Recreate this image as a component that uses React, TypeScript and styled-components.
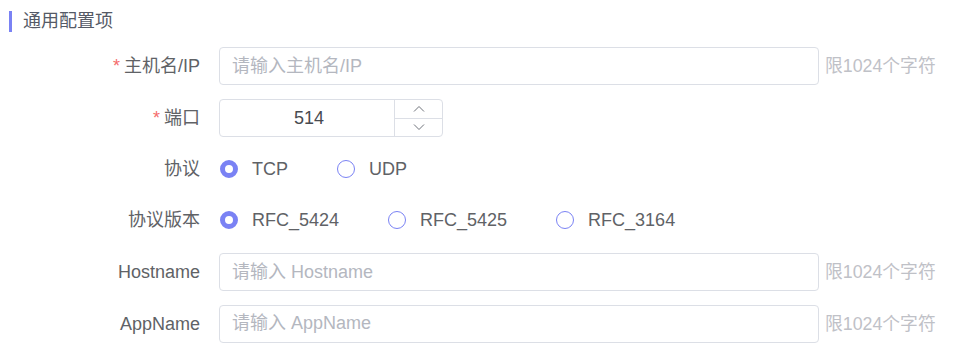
import React from "react";
import styled, { createGlobalStyle } from "styled-components";

const GlobalStyle = createGlobalStyle`
  html, body { margin: 0; padding: 0; background: #ffffff; }
  body {
    font-family: "Liberation Sans", "Noto Sans CJK SC", Arial, sans-serif;
    -webkit-font-smoothing: antialiased;
  }
  * { box-sizing: border-box; }
`;

const ACCENT = "#7a82f4";

const Page = styled.div`
  width: 971px;
  height: 361px;
  padding: 11px 0 0 9px;
  overflow: hidden;
`;

const SectionTitle = styled.div`
  display: flex;
  align-items: center;
  height: 21px;
  gap: 11px;
  font-size: 18px;
  color: #555a66;
  line-height: 21px;
`;

const TitleBar = styled.span`
  width: 3px;
  height: 21px;
  background: ${ACCENT};
`;

const Form = styled.div`
  display: flex;
  flex-direction: column;
  gap: 14px;
  margin-top: 15px;
  margin-left: -9px;
`;

const Row = styled.div<{ $h?: number }>`
  display: flex;
  align-items: center;
  height: ${(p) => p.$h ?? 38}px;
`;

const Label = styled.label<{ $required?: boolean }>`
  width: 200px;
  margin-right: 19px;
  display: flex;
  justify-content: flex-end;
  align-items: center;
  height: 24px;
  line-height: 24px;
  font-size: 18px;
  color: #606266;
  white-space: nowrap;
  &::before {
    content: ${(p) => (p.$required ? '"*"' : '""')};
    color: #f56c6c;
    margin-right: ${(p) => (p.$required ? "4px" : "0")};
  }
`;

const TextInput = styled.input`
  width: 600px;
  height: 38px;
  padding: 0 12px;
  border: 1px solid #dcdfe6;
  border-radius: 4px;
  font-family: inherit;
  font-size: 18px;
  color: #303133;
  outline: none;
  background: #fff;
  &::placeholder { color: #b4b7bf; }
`;

const Hint = styled.span`
  margin-left: 6px;
  height: 24px;
  line-height: 24px;
  font-size: 17.8px;
  color: #bfc1c7;
  white-space: nowrap;
`;

const NumberBox = styled.div`
  display: flex;
  width: 224px;
  height: 38px;
  border: 1px solid #dcdfe6;
  border-radius: 4px;
  overflow: hidden;
`;

const NumberField = styled.input`
  flex: 1;
  min-width: 0;
  border: none;
  outline: none;
  padding: 0 6px 0 10px;
  text-align: center;
  font-family: inherit;
  font-size: 18px;
  color: #484a50;
  background: transparent;
`;

const Controls = styled.div`
  width: 48px;
  display: flex;
  flex-direction: column;
  border-left: 1px solid #dcdfe6;
`;

const ControlBtn = styled.div<{ $top?: boolean }>`
  flex: 1;
  display: flex;
  align-items: center;
  justify-content: center;
  border-bottom: ${(p) => (p.$top ? "1px solid #dcdfe6" : "none")};
  color: #6f727a;
`;

const RadioGroup = styled.div`
  display: flex;
  align-items: center;
  gap: 48px;
`;

const RadioItem = styled.label`
  display: flex;
  align-items: center;
  gap: 14px;
  height: 24px;
  line-height: 24px;
  font-size: 18px;
  color: #606266;
  cursor: pointer;
`;

const RadioCircle = styled.span<{ $checked?: boolean }>`
  width: 18px;
  height: 18px;
  margin-left: 1px;
  border-radius: 50%;
  border: ${(p) => (p.$checked ? `5px solid ${ACCENT}` : `1px solid ${ACCENT}`)};
  background: #fff;
`;

const Chevron = ({ up }: { up?: boolean }) => (
  <svg width="12" height="8" viewBox="0 0 12 8" fill="none">
    <path
      d={up ? "M1 6.5 L6 1.5 L11 6.5" : "M1 1.5 L6 6.5 L11 1.5"}
      stroke="currentColor"
      strokeWidth="1"
    />
  </svg>
);

type Opt = { label: string; checked?: boolean };

const Radios = ({ options }: { options: Opt[] }) => (
  <RadioGroup>
    {options.map((o) => (
      <RadioItem key={o.label}>
        <RadioCircle $checked={o.checked} />
        {o.label}
      </RadioItem>
    ))}
  </RadioGroup>
);

export default function App() {
  return (
    <>
      <GlobalStyle />
      <Page>
        <SectionTitle>
          <TitleBar />
          通用配置项
        </SectionTitle>
        <Form>
          <Row>
            <Label $required>主机名/IP</Label>
            <TextInput placeholder="请输入主机名/IP" />
            <Hint>限1024个字符</Hint>
          </Row>
          <Row>
            <Label $required>端口</Label>
            <NumberBox>
              <NumberField defaultValue="514" />
              <Controls>
                <ControlBtn $top>
                  <Chevron up />
                </ControlBtn>
                <ControlBtn>
                  <Chevron />
                </ControlBtn>
              </Controls>
            </NumberBox>
          </Row>
          <Row $h={36}>
            <Label>协议</Label>
            <Radios options={[{ label: "TCP", checked: true }, { label: "UDP" }]} />
          </Row>
          <Row $h={38}>
            <Label>协议版本</Label>
            <Radios
              options={[
                { label: "RFC_5424", checked: true },
                { label: "RFC_5425" },
                { label: "RFC_3164" },
              ]}
            />
          </Row>
          <Row>
            <Label>Hostname</Label>
            <TextInput placeholder="请输入 Hostname" />
            <Hint>限1024个字符</Hint>
          </Row>
          <Row $h={37}>
            <Label>AppName</Label>
            <TextInput placeholder="请输入 AppName" />
            <Hint>限1024个字符</Hint>
          </Row>
        </Form>
      </Page>
    </>
  );
}
